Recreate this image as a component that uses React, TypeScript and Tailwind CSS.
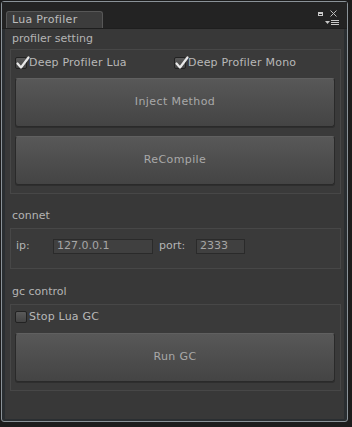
import type { FC, ReactNode } from 'react';

const font = { fontFamily: '"DejaVu Sans", Verdana, sans-serif' };

const CheckBox: FC<{ checked?: boolean; label: string }> = ({ checked, label }) => (
  <label className="flex items-center h-[14px]">
    <span className="relative w-[12px] h-[12px] rounded-[2px] border border-[#222] bg-gradient-to-b from-[#5a5a5a] to-[#444]">
      {checked && (
        <svg className="absolute -left-[1px] -top-[3px]" width="16" height="16" viewBox="0 0 16 16">
          <path d="M2.5 8.5 L6 12.5 L13.5 2.5" fill="none" stroke="#e8e8e8" strokeWidth="2.2" strokeLinecap="round" strokeLinejoin="round" />
        </svg>
      )}
    </span>
    <span className="ml-[2px] text-[11px] text-[#b8b8b8] tracking-[0.2px]">{label}</span>
  </label>
);

const Button: FC<{ children: ReactNode }> = ({ children }) => (
  <button
    type="button"
    className="w-full h-[49px] flex items-center justify-center rounded-[3px] border border-[#2a2a2a] border-t-[#606060] bg-gradient-to-b from-[#585858] to-[#444] shadow-[0_1px_0_#2e2e2e] text-[11px] text-[#a9a9a9] tracking-[0.4px]"
  >
    {children}
  </button>
);

const Box: FC<{ children: ReactNode; className?: string }> = ({ children, className }) => (
  <div className={`ml-[5px] mr-[3px] border border-[#474747] bg-[#3a3a3a] ${className ?? ''}`}>{children}</div>
);

const Label: FC<{ children: ReactNode; className?: string }> = ({ children, className }) => (
  <div className={`px-[7px] text-[11px] text-[#b4b4b4] ${className ?? ''}`}>{children}</div>
);

const Field: FC<{ value: string; width: string }> = ({ value, width }) => (
  <div className={`${width} h-[15px] flex items-center pl-[3px] bg-[#404040] border border-[#2a2a2a] text-[11px] text-[#a6a6a6]`}>
    {value}
  </div>
);

export default function App() {
  return (
    <div className="w-[352px] h-[427px] bg-[#1c1c1c] pl-[1px] pt-[1px]" style={font}>
      <div className="w-[347px] h-[421px] border border-[#8a9298] rounded-[3px] bg-[#2a2e31] flex flex-col">
        {/* tab strip */}
        <div className="relative h-[27px] bg-[#232323] border-b border-[#1e1e1e] flex items-end pl-[4px]">
          <div className="w-[97px] h-[17px] rounded-t-[3px] border border-b-0 border-[#575757] bg-[#3c3c3c] px-[5px] text-[11px] leading-[15px] text-[#bdbdbd] tracking-[0.3px]">
            Lua Profiler
          </div>
          <div className="absolute right-[10px] top-[8px] flex items-center gap-[7px]">
            <span className="w-[5px] h-[4px] border border-[#c8c8c8] border-t-2" />
            <svg width="7" height="7" viewBox="0 0 7 7">
              <path d="M0.5 0.5 L6.5 6.5 M6.5 0.5 L0.5 6.5" stroke="#bcbcbc" strokeWidth="1" />
            </svg>
          </div>
          <div className="absolute right-[8px] top-[18px] flex items-center gap-[1px]">
            <svg width="5" height="3" viewBox="0 0 5 3">
              <path d="M0 0 H5 L2.5 3 Z" fill="#c8c8c8" />
            </svg>
            <div className="flex flex-col gap-[1px]">
              <span className="w-[8px] h-[1px] bg-[#c8c8c8]" />
              <span className="w-[8px] h-[1px] bg-[#c8c8c8]" />
              <span className="w-[8px] h-[1px] bg-[#c8c8c8]" />
            </div>
          </div>
        </div>

        <div className="flex-1 mx-[3px] mb-[2px] bg-[#383838] flex flex-col">
          <Label className="h-[18px] leading-[18px] mt-[1px]">profiler setting</Label>

          <Box className="mt-[1px] pl-[4px] pr-[5px] pt-[6px] pb-[8px]">
            <div className="flex items-center h-[14px]">
              <div className="w-[159px]">
                <CheckBox checked label="Deep Profiler Lua" />
              </div>
              <CheckBox checked label="Deep Profiler Mono" />
            </div>
            <div className="mt-[8px] flex flex-col gap-[9px]">
              <Button>Inject Method</Button>
              <Button>ReCompile</Button>
            </div>
          </Box>

          <Label className="mt-[14px] h-[16px] leading-[16px]">connet</Label>
          <Box className="mt-[4px] h-[41px] flex items-center pl-[5px] pt-[-2px] text-[11px] text-[#b4b4b4]">
            <div className="flex items-center -mt-[4px]">
              <span className="w-[37px]">ip:</span>
              <Field value="127.0.0.1" width="w-[100px]" />
              <span className="ml-[6px] w-[37px]">port:</span>
              <Field value="2333" width="w-[49px]" />
            </div>
          </Box>

          <Label className="mt-[15px] h-[16px] leading-[16px]">gc control</Label>
          <Box className="mt-[4px] pl-[4px] pr-[5px] pt-[5px] pb-[8px]">
            <CheckBox label="Stop Lua GC" />
            <div className="mt-[9px]">
              <Button>Run GC</Button>
            </div>
          </Box>
        </div>
      </div>
    </div>
  );
}
